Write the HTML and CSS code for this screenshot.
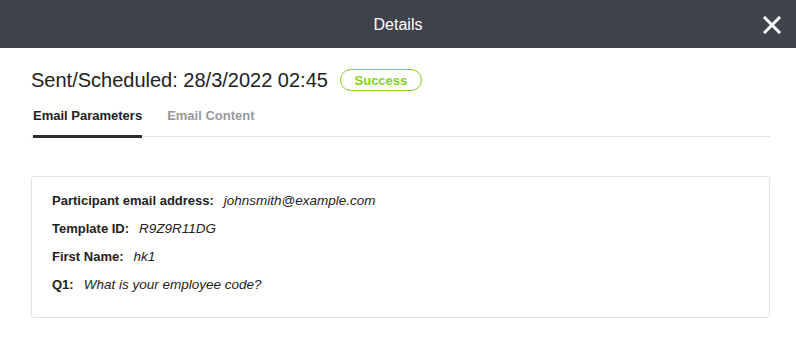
FILE: index.html
```html
<!DOCTYPE html>
<html>
<head>
    <title>Details</title>
    <link rel="stylesheet" href="styles.css">
</head>
<body>
    <div class="modal">
        <div class="modal-header">
            <span class="modal-title">Details</span>
            <button class="close" aria-label="Close">
                <svg width="18" height="18" viewBox="0 0 18 18">
                    <path d="M2 2 L16 16 M16 2 L2 16" stroke="#fff" stroke-width="3" stroke-linecap="square"/>
                </svg>
            </button>
        </div>
        <div class="modal-body">
            <div class="status-row">
                <h2 class="sent">Sent/Scheduled: 28/3/2022 02:45</h2>
                <span class="badge">Success</span>
            </div>
            <div class="tabs">
                <div class="tab active">Email Parameters</div>
                <div class="tab">Email Content</div>
            </div>
            <div class="card">
                <div class="param"><span class="label">Participant email address:</span><span class="value">johnsmith@example.com</span></div>
                <div class="param"><span class="label">Template ID:</span><span class="value">R9Z9R11DG</span></div>
                <div class="param"><span class="label">First Name:</span><span class="value">hk1</span></div>
                <div class="param"><span class="label">Q1:</span><span class="value">What is your employee code?</span></div>
            </div>
        </div>
    </div>
</body>
</html>
```

FILE: styles.css
```css
body {
    margin: 0;
    background-color: #fff;
    font-family: 'Liberation Sans', Arial, sans-serif;
    color: #222;
}
.modal-header {
    height: 48px;
    background-color: #3f434b;
    display: flex;
    align-items: center;
    justify-content: center;
    position: relative;
}
.modal-title {
    color: #fff;
    font-size: 16px;
    padding-top: 2px;
}
.close {
    position: absolute;
    right: 15px;
    top: 16px;
    width: 18px;
    height: 18px;
    padding: 0;
    border: 0;
    background: none;
}
.close svg {
    display: block;
}
.modal-body {
    padding: 20px 26px 0 31px;
}
.status-row {
    display: flex;
    align-items: center;
    height: 24px;
}
.sent {
    margin: 0;
    font-size: 20px;
    font-weight: normal;
    color: #222;
}
.badge {
    margin-left: 12px;
    width: 80px;
    height: 20px;
    border: 1px solid #7ed321;
    border-radius: 12px;
    color: #7ed321;
    font-size: 13px;
    font-weight: bold;
    display: flex;
    align-items: center;
    justify-content: center;
}
.tabs {
    display: flex;
    gap: 25px;
    margin-top: 13px;
    padding-left: 2px;
    border-bottom: 1px solid #e3e3e3;
}
.tab {
    font-size: 13px;
    font-weight: bold;
    color: #999;
    padding: 3px 0 12px;
    margin-bottom: -2px;
    border-bottom: 3px solid transparent;
}
.tab.active {
    color: #222;
    border-bottom-color: #2a2d33;
}
.card {
    margin-top: 39px;
    border: 1px solid #e2e2e2;
    border-radius: 3px;
    padding: 14px 20px 14px;
}
.param {
    font-size: 13px;
    line-height: 20px;
    margin-bottom: 8px;
}
.label {
    font-weight: bold;
    margin-right: 10px;
}
.value {
    font-size: 13.5px;
    font-style: italic;
}
```
